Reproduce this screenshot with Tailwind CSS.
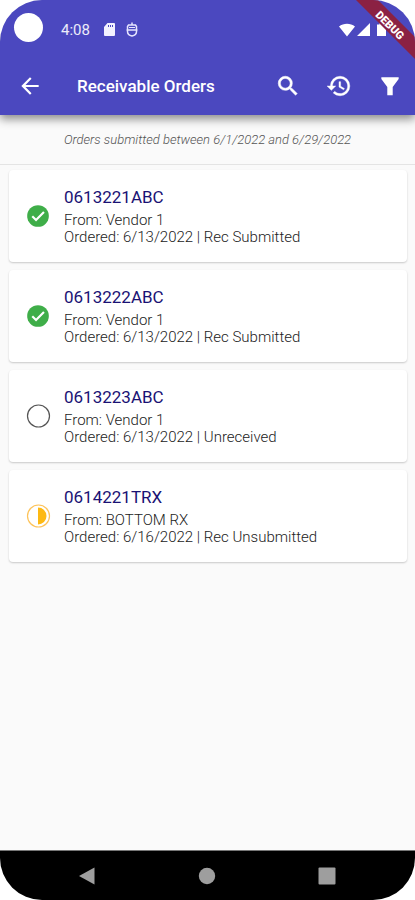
<!DOCTYPE html>
<html lang="en">
<head>
<meta charset="utf-8">
<meta name="viewport" content="width=device-width, initial-scale=1">
<title>Receivable Orders</title>
<script src="https://cdn.jsdelivr.net/npm/@tailwindcss/browser@4"></script>
</head>
<body class="bg-white font-['Roboto','Liberation_Sans',sans-serif]">
<div class="relative flex min-h-screen flex-col overflow-hidden rounded-[42px] bg-[#fafafa]">
  <header class="relative z-10 bg-[#4b48bf] text-white shadow-[0_4px_9px_rgba(0,0,0,0.45)]">
    <!-- Status bar -->
    <div class="flex h-14 items-center pt-1 pl-[14px] pr-7">
      <span class="mb-1.5 size-[29px] rounded-full bg-white"></span>
      <span class="ml-[18px] text-[15px] leading-5 text-white/90">4:08</span>
      <svg class="ml-[11px] size-4" viewBox="0 0 16 16" fill="#f3f2ff" aria-hidden="true"><path fill-rule="evenodd" d="M6.500 1H13a1 1 0 0 1 1 1v11a1 1 0 0 1-1 1H4a1 1 0 0 1-1-1V5zM7 3v2h1V3zm2 0v2h1V3zm2 0v2h1V3z"/></svg>
      <svg class="ml-[7px] size-4" viewBox="0 0 16 16" fill="none" stroke="#e6e5ff" stroke-width="1.500" aria-hidden="true"><path d="M8 .5V3M4.500 3h7l1 1.500V9.500c0 2.500-2 4-4.500 4.500-2.500-.5-4.500-2-4.500-4.500v-5zM2.500 8h11"/><path d="M5 5.500h6" stroke-width="1"/></svg>
      <svg class="ml-auto h-4 w-[50px]" viewBox="0 0 50 16" fill="#fff" aria-hidden="true"><path d="M2 4.500C6.500 .7 13.500 .7 18 4.500L10 14.500zM33 1v13H20zM40 2.500h2.500V1h4v1.500H49V14h-9z"/></svg>
    </div>
    <!-- App bar -->
    <div class="flex h-[59px] items-center pr-3">
      <button type="button" aria-label="Back" class="ml-[17px] flex size-[26px] items-center justify-center"><svg class="size-[26px]" viewBox="0 0 24 24" fill="currentColor"><path d="M20 11H7.830l5.590-5.590L12 4l-8 8 8 8 1.410-1.410L7.830 13H20z"/></svg></button>
      <h1 class="ml-[34px] flex-1 text-[17px] leading-6 font-medium">Receivable Orders</h1>
      <div class="flex gap-[25px]">
        <button type="button" aria-label="Search" class="size-[26px]"><svg class="size-[26px]" viewBox="0 0 24 24" fill="currentColor" stroke="currentColor" stroke-width=".5"><path d="M15.500 14h-.79l-.28-.27A6.471 6.471 0 0 0 16 9.500 6.500 6.500 0 1 0 9.500 16c1.610 0 3.090-.59 4.230-1.570l.27.28v.79l5 4.990L20.490 19zm-6 0C7.010 14 5 11.990 5 9.500S7.010 5 9.500 5 14 7.010 14 9.500 11.990 14 9.500 14z"/></svg></button>
        <button type="button" aria-label="History" class="size-[26px]"><svg class="size-[26px]" viewBox="0 0 24 24" fill="currentColor" stroke="currentColor" stroke-width=".4"><path d="M13 3a9 9 0 0 0-9 9H1l3.890 3.890.070.140L9 12H6c0-3.870 3.130-7 7-7s7 3.130 7 7-3.130 7-7 7c-1.930 0-3.680-.79-4.940-2.060l-1.420 1.420A8.954 8.954 0 0 0 13 21a9 9 0 0 0 0-18zm-1 5v5l4.280 2.540.72-1.210-3.500-2.080V8z"/></svg></button>
        <button type="button" aria-label="Filter" class="size-[26px]"><svg class="size-[26px]" viewBox="0 0 24 24" fill="currentColor"><path d="M4 4h16v1.500L14.500 13v7.500h-5V13L4 5.500z"/></svg></button>
      </div>
    </div>
    <!-- Debug ribbon -->
    <svg class="absolute top-0 right-0 size-[62px]" viewBox="0 0 62 62" role="img" aria-label="Debug"><path d="M3 0h22l37 37v22z" fill="#8b2143"/><text x="37" y="29" transform="rotate(45 37 25)" text-anchor="middle" font-size="11" font-weight="900" fill="#fff">DEBUG</text></svg>
  </header>

  <p class="border-b border-[#e4e4e4] pt-[15px] pb-[14px] text-center text-[13px] leading-5 font-light text-[#555] italic">Orders submitted between 6/1/2022 and 6/29/2022</p>

  <main class="flex-1 pt-[5px] pr-2 pl-[9px]">
    <ul class="flex flex-col gap-2">
      <li class="flex h-[92px] items-center rounded-[4px] bg-white pl-4 shadow-[0_1px_2px_rgba(0,0,0,0.2)]">
        <svg class="size-[26px]" viewBox="0 0 24 24" role="img" aria-label="Received"><circle cx="12" cy="12" r="10" fill="#3fae49"/><path d="M6.700 12.200l3.500 3.500 7.300-7.300" fill="none" stroke="#fff" stroke-width="2"/></svg>
        <div class="ml-[13px]"><h2 class="mb-[5px] text-[17px] leading-5 text-[#1a1274]">0613221ABC</h2><p class="text-[15px] leading-[17px] font-light text-[#222]">From: Vendor 1<br>Ordered: 6/13/2022 | Rec Submitted</p></div>
      </li>
      <li class="flex h-[92px] items-center rounded-[4px] bg-white pl-4 shadow-[0_1px_2px_rgba(0,0,0,0.2)]">
        <svg class="size-[26px]" viewBox="0 0 24 24" role="img" aria-label="Received"><circle cx="12" cy="12" r="10" fill="#3fae49"/><path d="M6.700 12.200l3.500 3.500 7.300-7.300" fill="none" stroke="#fff" stroke-width="2"/></svg>
        <div class="ml-[13px]"><h2 class="mb-[5px] text-[17px] leading-5 text-[#1a1274]">0613222ABC</h2><p class="text-[15px] leading-[17px] font-light text-[#222]">From: Vendor 1<br>Ordered: 6/13/2022 | Rec Submitted</p></div>
      </li>
      <li class="flex h-[92px] items-center rounded-[4px] bg-white pl-4 shadow-[0_1px_2px_rgba(0,0,0,0.2)]">
        <svg class="size-[26px]" viewBox="0 0 26 26" role="img" aria-label="Unreceived"><circle cx="13.500" cy="13" r="11" fill="none" stroke="#555" stroke-width="1.200"/></svg>
        <div class="ml-[13px]"><h2 class="mb-[5px] text-[17px] leading-5 text-[#1a1274]">0613223ABC</h2><p class="text-[15px] leading-[17px] font-light text-[#222]">From: Vendor 1<br>Ordered: 6/13/2022 | Unreceived</p></div>
      </li>
      <li class="flex h-[92px] items-center rounded-[4px] bg-white pl-4 shadow-[0_1px_2px_rgba(0,0,0,0.2)]">
        <svg class="size-[26px]" viewBox="0 0 26 26" role="img" aria-label="Partly received"><circle cx="13.500" cy="13" r="11" fill="none" stroke="#fdc35a" stroke-width="1.200"/><path d="M13 4.500a8.500 8.500 0 0 1 0 17z" fill="#fdb913"/></svg>
        <div class="ml-[13px]"><h2 class="mb-[5px] text-[17px] leading-5 text-[#1a1274]">0614221TRX</h2><p class="text-[15px] leading-[17px] font-light text-[#222]">From: BOTTOM RX<br>Ordered: 6/16/2022 | Rec Unsubmitted</p></div>
      </li>
    </ul>
  </main>

  <nav class="flex h-[50px] items-center justify-center gap-[102px] border-t border-[#777] bg-black pr-0.5 text-[#9e9e9e]">
    <button type="button" aria-label="Back" class="size-[18px]"><svg class="size-[18px]" viewBox="0 0 18 18" fill="currentColor"><path d="M1 9 16.500 .5v17z"/></svg></button>
    <button type="button" aria-label="Home" class="size-[18px]"><svg class="size-[18px]" viewBox="0 0 18 18" fill="currentColor"><circle cx="9" cy="9" r="8.200"/></svg></button>
    <button type="button" aria-label="Recent apps" class="size-[18px]"><svg class="size-[18px]" viewBox="0 0 18 18" fill="currentColor"><rect x=".5" y=".5" width="17" height="17" rx="1"/></svg></button>
  </nav>
</div>
</body>
</html>
